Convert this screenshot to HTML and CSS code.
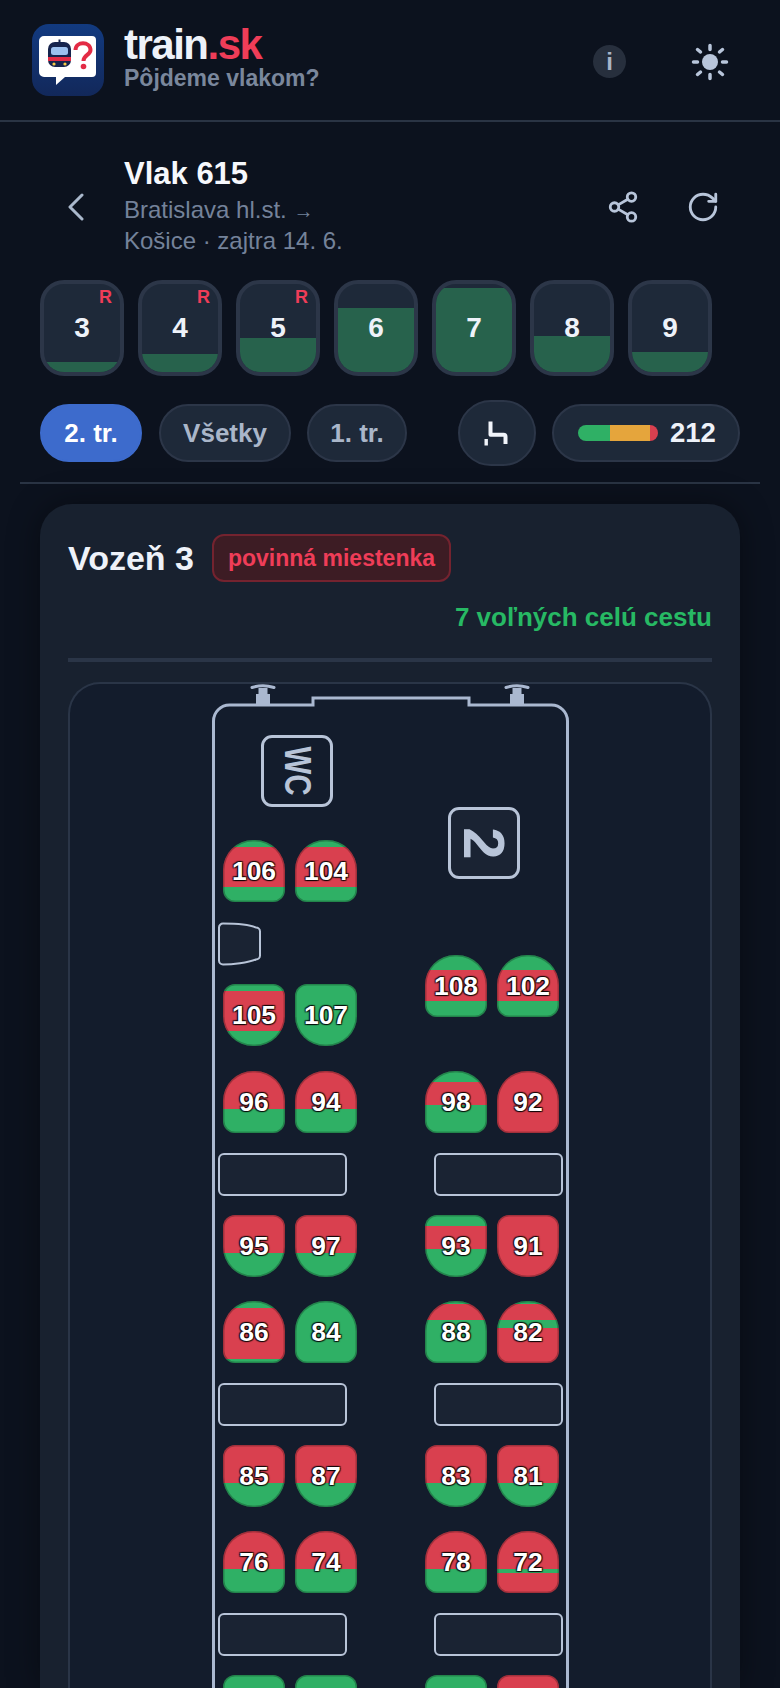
FILE: index.html
```html
<!DOCTYPE html>
<html lang="sk">

<head>
    <meta charset="UTF-8">
    <meta name="viewport" content="width=device-width, initial-scale=1.0">
    <title>train.sk</title>
    <link rel="stylesheet" href="styles.css">
</head>

<body>

    <header class="topbar">
        <svg class="logo" viewBox="0 0 72 72">
            <defs>
                <linearGradient id="logoBg" x1="0" y1="0" x2="0" y2="1">
                    <stop offset="0" stop-color="#123a80" />
                    <stop offset="1" stop-color="#12285a" />
                </linearGradient>
            </defs>
            <rect width="72" height="72" rx="17" fill="url(#logoBg)" />
            <path d="M12 12h48a4 4 0 0 1 4 4v33a4 4 0 0 1-4 4H33l-9 8v-8H12a5 5 0 0 1-5-5V17a5 5 0 0 1 5-5z" fill="#fff" />
            <path d="M16 25a7 7 0 0 1 7-7h9a7 7 0 0 1 7 7v11a7 7 0 0 1-7 7H23a7 7 0 0 1-7-7z" fill="#16244d" />
            <rect x="26.500" y="15.500" width="2" height="3" fill="#16244d" />
            <rect x="19" y="23" width="17" height="8" rx="2.500" fill="#9cc0ee" />
            <rect x="16" y="33" width="23" height="4" fill="#e32b45" />
            <circle cx="22" cy="40" r="1.600" fill="#f6c945" />
            <circle cx="33" cy="40" r="1.600" fill="#f6c945" />
            <path d="M43.500 26c0-9 15-9 15 0 0 5-7 5-7 11" fill="none" stroke="#e32b45" stroke-width="4" />
            <circle cx="51.500" cy="42.500" r="2.800" fill="#e32b45" />
        </svg>
        <div class="brand">
            <div class="brand-name">train<span class="brand-tld">.sk</span></div>
            <div class="brand-sub">Pôjdeme vlakom?</div>
        </div>
        <div class="info-btn">i</div>
        <svg class="sun" viewBox="0 0 38 38" fill="none" stroke="#b8c5da" stroke-width="3.500" stroke-linecap="round">
            <circle cx="19" cy="19" r="8" fill="#b8c5da" stroke="none" />
            <path d="M19 2.500v4M19 31.500v4M2.500 19h4M31.500 19h4M6.500 6.500l3 2.500M31.500 6.500l-3 2.500M6.500 31.500l3-2.500M31.500 31.500l-3-2.500" />
        </svg>
    </header>

    <section class="trainbar">
        <svg class="back" viewBox="0 0 18 28" fill="none" stroke="#aab8cc" stroke-width="3" stroke-linecap="round" stroke-linejoin="round">
            <path d="M15 2 3 14l12 12" />
        </svg>
        <div class="train-info">
            <h1 class="train-name">Vlak 615</h1>
            <div class="train-route">Bratislava hl.st. <span class="arrow">→</span><br>Košice · zajtra 14. 6.</div>
        </div>
        <svg class="tool" viewBox="0 0 24 24" fill="none" stroke="#b8c5da" stroke-width="2" stroke-linecap="round">
            <circle cx="18" cy="5" r="3" />
            <circle cx="6" cy="12" r="3" />
            <circle cx="18" cy="19" r="3" />
            <path d="m8.600 13.500 6.800 4M15.400 6.500l-6.800 4" />
        </svg>
        <svg class="tool tool-last" viewBox="0 0 24 24" fill="none" stroke="#b8c5da" stroke-width="2" stroke-linecap="round" stroke-linejoin="round">
            <path d="M21 12a9 9 0 1 1-9-9c2.520 0 4.930 1 6.740 2.740L21 8" />
            <path d="M21 3v5h-5" />
        </svg>
    </section>

    <nav class="wagons">
        <div class="wagon"><div class="wagon-fill" style="height:10px"></div><span class="wagon-r">R</span><span class="wagon-no">3</span></div>
        <div class="wagon"><div class="wagon-fill" style="height:18px"></div><span class="wagon-r">R</span><span class="wagon-no">4</span></div>
        <div class="wagon"><div class="wagon-fill" style="height:34px"></div><span class="wagon-r">R</span><span class="wagon-no">5</span></div>
        <div class="wagon"><div class="wagon-fill" style="height:64px"></div><span class="wagon-no">6</span></div>
        <div class="wagon"><div class="wagon-fill" style="height:84px"></div><span class="wagon-no">7</span></div>
        <div class="wagon"><div class="wagon-fill" style="height:36px"></div><span class="wagon-no">8</span></div>
        <div class="wagon"><div class="wagon-fill" style="height:20px"></div><span class="wagon-no">9</span></div>
    </nav>

    <div class="filters">
        <div class="pill pill-active">2. tr.</div>
        <div class="pill pill-all">Všetky</div>
        <div class="pill pill-first">1. tr.</div>
        <div class="seat-toggle">
            <svg viewBox="0 0 28 28" fill="none" stroke="#f1f4fa" stroke-width="4">
                <path d="M7.500 2.500V15.700H20.500a2 2 0 0 1 2 2V25" stroke-linejoin="round" />
                <path d="M3.200 20v6.500" stroke-width="3.400" />
            </svg>
        </div>
        <div class="pill pill-count">
            <div class="count-bar">
                <span class="count-green"></span>
                <span class="count-orange"></span>
                <span class="count-red"></span>
            </div>
            212
        </div>
    </div>

    <hr class="rule">

    <main class="card">
        <div class="card-head">
            <h2 class="card-title">Vozeň 3</h2>
            <span class="chip">povinná miestenka</span>
        </div>
        <div class="free-count">7 voľných celú cestu</div>
        <div class="card-rule"></div>

        <div class="plan">
            <svg class="hull" viewBox="0 0 380 1004" fill="none" stroke="#aab8d0">
                <path d="M1.500 1004V37a16 16 0 0 1 16-16H101v-7H257v7h82.500a16 16 0 0 1 16 16v967" stroke-width="3" />
                <g fill="#aab8d0" stroke="none">
                    <path d="M44 21V10h2.500V4h9v6H58v11z" />
                    <path d="M298 21V10h2.500V4h9v6H312v11z" />
                </g>
                <path d="M40 3.500q11-3.500 22 0M294 3.500q11-3.500 22 0" stroke-width="3" stroke-linecap="round" />
            </svg>

            <div class="sign sign-wc"><span>WC</span></div>
            <div class="sign sign-two"><span>2</span></div>

            <svg class="cab" viewBox="0 0 44 44">
                <path d="M5 1.500C14 1.500 30 2 38 5.500a4 4 0 0 1 4 4v24a4 4 0 0 1-4 4C30 41 14 42.500 5 42.500a4 4 0 0 1-4-4V5.500a4 4 0 0 1 4-4z" fill="#1a2333" stroke="#b8c4d8" stroke-width="2" />
            </svg>

            <div class="table t1 left"></div>
            <div class="table t1 right"></div>
            <div class="table t2 left"></div>
            <div class="table t2 right"></div>
            <div class="table t3 left"></div>
            <div class="table t3 right"></div>

            <div class="seat up r1 c1" style="background:linear-gradient(#2fb065 12%,#d9404f 12% 76%,#2fb065 76%)">106</div>
            <div class="seat up r1 c2" style="background:linear-gradient(#2fb065 12%,#d9404f 12% 76%,#2fb065 76%)">104</div>
            <div class="seat up r2 c3" style="background:linear-gradient(#2fb065 25%,#d9404f 25% 75%,#2fb065 75%)">108</div>
            <div class="seat up r2 c4" style="background:linear-gradient(#2fb065 25%,#d9404f 25% 75%,#2fb065 75%)">102</div>
            <div class="seat down r3 c1" style="background:linear-gradient(#2fb065 12%,#d9404f 12% 76%,#2fb065 76%)">105</div>
            <div class="seat down r3 c2" style="background:#2fb065">107</div>
            <div class="seat up r4 c1" style="background:linear-gradient(#d9404f 62%,#2fb065 62%)">96</div>
            <div class="seat up r4 c2" style="background:linear-gradient(#d9404f 62%,#2fb065 62%)">94</div>
            <div class="seat up r4 c3" style="background:linear-gradient(#2fb065 17%,#d9404f 17% 55%,#2fb065 55%)">98</div>
            <div class="seat up r4 c4" style="background:#d9404f">92</div>
            <div class="seat down r5 c1" style="background:linear-gradient(#d9404f 62%,#2fb065 62%)">95</div>
            <div class="seat down r5 c2" style="background:linear-gradient(#d9404f 62%,#2fb065 62%)">97</div>
            <div class="seat down r5 c3" style="background:linear-gradient(#2fb065 17%,#d9404f 17% 55%,#2fb065 55%)">93</div>
            <div class="seat down r5 c4" style="background:#d9404f">91</div>
            <div class="seat up r6 c1" style="background:linear-gradient(#2fb065 12%,#d9404f 12% 94%,#2fb065 94%)">86</div>
            <div class="seat up r6 c2" style="background:#2fb065">84</div>
            <div class="seat up r6 c3" style="background:linear-gradient(#2fb065 5%,#d9404f 5% 30%,#2fb065 30%)">88</div>
            <div class="seat up r6 c4" style="background:linear-gradient(#2fb065 5%,#d9404f 5% 30%,#2fb065 30% 43%,#d9404f 43%)">82</div>
            <div class="seat down r7 c1" style="background:linear-gradient(#d9404f 62%,#2fb065 62%)">85</div>
            <div class="seat down r7 c2" style="background:linear-gradient(#d9404f 62%,#2fb065 62%)">87</div>
            <div class="seat down r7 c3" style="background:linear-gradient(#d9404f 62%,#2fb065 62%)">83</div>
            <div class="seat down r7 c4" style="background:linear-gradient(#d9404f 62%,#2fb065 62%)">81</div>
            <div class="seat up r8 c1" style="background:linear-gradient(#d9404f 62%,#2fb065 62%)">76</div>
            <div class="seat up r8 c2" style="background:linear-gradient(#d9404f 62%,#2fb065 62%)">74</div>
            <div class="seat up r8 c3" style="background:linear-gradient(#d9404f 62%,#2fb065 62%)">78</div>
            <div class="seat up r8 c4" style="background:linear-gradient(#d9404f 62%,#2fb065 62%,#2fb065 68%,#d9404f 68%)">72</div>
            <div class="seat down r9 c1" style="background:#2fb065"></div>
            <div class="seat down r9 c2" style="background:#2fb065"></div>
            <div class="seat down r9 c3" style="background:#2fb065"></div>
            <div class="seat down r9 c4" style="background:#d9404f"></div>
        </div>
    </main>

</body>

</html>
```

FILE: styles.css
```css
* {
  box-sizing: border-box;
}

html,
body {
  height: 1688px;
  overflow: hidden;
}

body {
  margin: 0;
  font-family: "Liberation Sans", Arial, sans-serif;
  color: #eef2f9;
  background-color: #0c121e;
}

/* header */
.topbar {
  display: flex;
  align-items: center;
  height: 122px;
  padding-left: 32px;
  border-bottom: 2px solid #2a3444;
}

.logo {
  width: 72px;
  height: 72px;
  flex: none;
}

.brand {
  margin: -6px 0 0 20px;
  flex: 1;
}

.brand-name {
  font-size: 42px;
  font-weight: 700;
  line-height: 42px;
  letter-spacing: -1.500px;
}

.brand-tld {
  color: #ef3d58;
}

.brand-sub {
  font-size: 23px;
  font-weight: 700;
  line-height: 24px;
  color: #7a879c;
}

.info-btn {
  width: 33px;
  height: 33px;
  margin-top: 2px;
  border-radius: 50%;
  background: #272f3d;
  color: #a9b5c8;
  font-size: 24px;
  font-weight: 700;
  line-height: 33px;
  text-align: center;
}

.sun {
  width: 38px;
  height: 38px;
  margin: 4px 51px 0 65px;
}

/* train row */
.trainbar {
  display: flex;
  align-items: center;
  height: 158px;
  padding: 8px 0 0 67px;
}

.back {
  width: 18px;
  height: 28px;
  margin-top: 4px;
}

.train-info {
  margin-left: 39px;
  flex: 1;
}

.train-name {
  margin: 1px 0 0;
  font-size: 31px;
  font-weight: 700;
  line-height: 36px;
  color: #f6f8fc;
}

.train-route {
  margin-top: 3px;
  font-size: 24px;
  line-height: 30px;
  color: #74829a;
}

.arrow {
  font-size: 20px;
}

.tool {
  width: 34px;
  height: 34px;
  margin-top: 4px;
  margin-right: 46px;
}

.tool-last {
  margin-right: 60px;
}

/* wagon tabs */
.wagons {
  display: flex;
  gap: 14px;
  padding-left: 40px;
}

.wagon {
  position: relative;
  display: flex;
  align-items: center;
  justify-content: center;
  width: 84px;
  height: 96px;
  border: 4px solid #2c3648;
  border-radius: 24px;
  background: #1e2939;
  overflow: hidden;
}

.wagon-fill {
  position: absolute;
  left: 0;
  right: 0;
  bottom: 0;
  background: #27624c;
}

.wagon-no {
  position: relative;
  font-size: 28px;
  font-weight: 700;
}

.wagon-r {
  position: absolute;
  top: 3px;
  right: 8px;
  font-size: 18px;
  font-weight: 700;
  color: #ef3d58;
}

/* filters */
.filters {
  display: flex;
  align-items: center;
  height: 66px;
  margin-top: 24px;
  padding-left: 40px;
}

.pill {
  display: flex;
  align-items: center;
  justify-content: center;
  height: 58px;
  border: 2px solid #2c3648;
  border-radius: 29px;
  background: #1e2939;
  color: #aab6c9;
  font-size: 26px;
  font-weight: 700;
}

.pill-active {
  width: 102px;
  border-color: #3d6bcc;
  background: #3d6bcc;
  color: #fff;
}

.pill-all {
  width: 132px;
  margin-left: 17px;
}

.pill-first {
  width: 100px;
  margin-left: 16px;
}

.seat-toggle {
  display: flex;
  align-items: center;
  justify-content: center;
  width: 78px;
  height: 66px;
  margin-left: 51px;
  border: 2px solid #2c3648;
  border-radius: 33px;
  background: #1e2939;
}

.seat-toggle svg {
  width: 28px;
  height: 28px;
}

.pill-count {
  justify-content: flex-start;
  width: 188px;
  margin-left: 16px;
  padding-left: 24px;
  gap: 12px;
  color: #eef2f9;
  font-size: 27.500px;
}

.count-bar {
  display: flex;
  width: 80px;
  height: 16px;
  border-radius: 8px;
  overflow: hidden;
}

.count-green {
  width: 32px;
  background: #2fb065;
}

.count-orange {
  width: 40px;
  background: #e5a53c;
}

.count-red {
  width: 8px;
  background: #d9404f;
}

.rule {
  height: 2px;
  margin: 16px 20px 0;
  border: 0;
  background: #2a3444;
}

/* wagon card */
.card {
  height: 1184px;
  margin: 20px 40px 0;
  padding: 30px 28px 0;
  border-radius: 32px 32px 0 0;
  background: #18212f;
  box-shadow: 0 0 32px rgba(0, 0, 0, 0.4);
  overflow: hidden;
}

.card-head {
  display: flex;
  align-items: center;
  gap: 18px;
}

.card-title {
  margin: 0;
  font-size: 34px;
  font-weight: 700;
}

.chip {
  height: 48px;
  padding: 0 14px;
  border: 2px solid #74232f;
  border-radius: 12px;
  background: #3d1c24;
  color: #ef3d58;
  font-size: 23px;
  font-weight: 700;
  line-height: 44px;
}

.free-count {
  margin-top: 15px;
  font-size: 26px;
  font-weight: 700;
  line-height: 40px;
  text-align: right;
  color: #27b964;
}

.card-rule {
  height: 4px;
  margin-top: 21px;
  background: #2a3547;
}

.plan {
  position: relative;
  height: 1006px;
  border: 2px solid #2a3547;
  border-bottom: 0;
  margin-top: 20px;
  border-radius: 32px 32px 0 0;
  background: #131c2c;
  overflow: hidden;
}

/* diagram pieces, placed on the plan */
.hull {
  position: absolute;
  left: 142px;
  top: 0;
  width: 380px;
  height: 1004px;
}

.sign {
  position: absolute;
  display: flex;
  align-items: center;
  justify-content: center;
  width: 72px;
  height: 72px;
  border: 3px solid #b8c4d8;
  border-radius: 11px;
  color: #b8c4d8;
  font-weight: 700;
}

.sign-wc {
  left: 191px;
  top: 51px;
  font-size: 36px;
}

.sign-wc span {
  transform: rotate(90deg) scaleX(0.82);
}

.sign-two {
  left: 378px;
  top: 123px;
  background: #1a2333;
  font-size: 58px;
}

.sign-two span {
  transform: rotate(90deg);
}

.cab {
  position: absolute;
  left: 148px;
  top: 238px;
  width: 44px;
  height: 44px;
}

.table {
  position: absolute;
  width: 129px;
  height: 43px;
  border: 2px solid #b8c4d8;
  border-radius: 6px;
  background: #1a2333;
}

.table.left {
  left: 148px;
}

.table.right {
  left: 364px;
}

.t1 {
  top: 469px;
}

.t2 {
  top: 699px;
}

.t3 {
  top: 929px;
}

.seat {
  position: absolute;
  display: flex;
  align-items: center;
  justify-content: center;
  width: 62px;
  height: 62px;
  box-shadow: inset 0 0 0 1.500px rgba(0, 0, 0, 0.25);
  color: #fff;
  font-size: 26.500px;
  font-weight: 700;
  text-shadow: -1px -1px 1px rgba(0, 0, 0, 0.75), 1px -1px 1px rgba(0, 0, 0, 0.75), -1px 1px 1px rgba(0, 0, 0, 0.75), 1px 1px 1px rgba(0, 0, 0, 0.75);
}

.seat.up {
  border-radius: 30px 30px 12px 12px;
}

.seat.down {
  border-radius: 12px 12px 30px 30px;
}

.c1 { left: 153px; }
.c2 { left: 225px; }
.c3 { left: 355px; }
.c4 { left: 427px; }

.r1 { top: 156px; }
.r2 { top: 271px; }
.r3 { top: 300px; }
.r4 { top: 387px; }
.r5 { top: 531px; }
.r6 { top: 617px; }
.r7 { top: 761px; }
.r8 { top: 847px; }
.r9 { top: 991px; }
```
